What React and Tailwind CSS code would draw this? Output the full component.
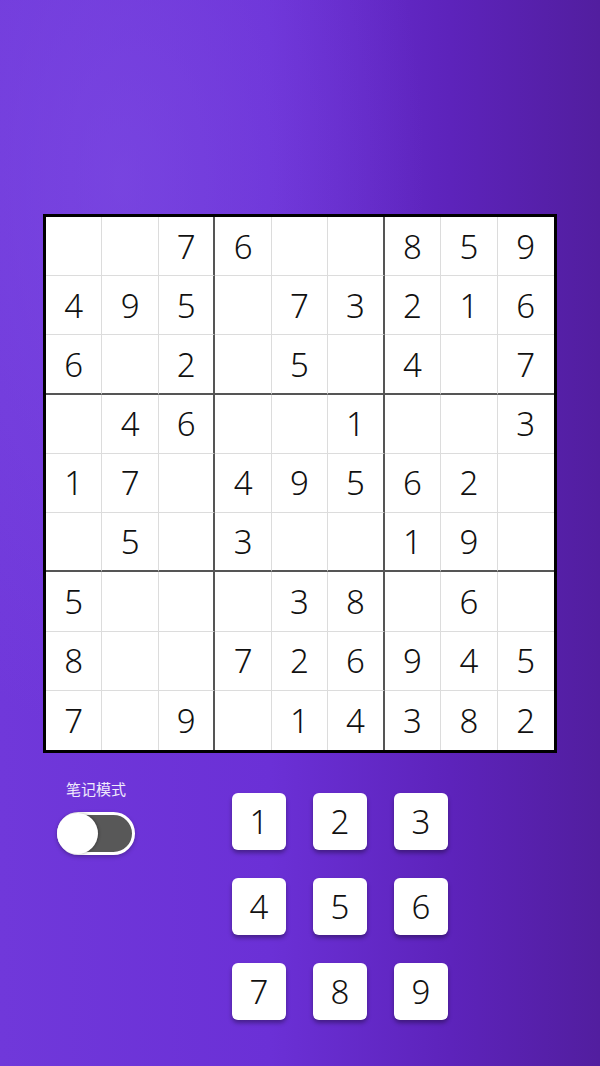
import React from "react";

const GRID = [
  [0, 0, 7, 6, 0, 0, 8, 5, 9],
  [4, 9, 5, 0, 7, 3, 2, 1, 6],
  [6, 0, 2, 0, 5, 0, 4, 0, 7],
  [0, 4, 6, 0, 0, 1, 0, 0, 3],
  [1, 7, 0, 4, 9, 5, 6, 2, 0],
  [0, 5, 0, 3, 0, 0, 1, 9, 0],
  [5, 0, 0, 0, 3, 8, 0, 6, 0],
  [8, 0, 0, 7, 2, 6, 9, 4, 5],
  [7, 0, 9, 0, 1, 4, 3, 8, 2],
];

function Cell({ v, r, c }) {
  const right =
    c === 2 || c === 5
      ? "border-r-[2px] border-r-[#555555]"
      : c < 8
      ? "border-r border-r-[#dcdcdc]"
      : "";
  const bottom =
    r === 2 || r === 5
      ? "border-b-[2px] border-b-[#555555]"
      : r < 8
      ? "border-b border-b-[#dcdcdc]"
      : "";
  return (
    <div
      className={`flex items-center justify-center bg-white text-[33px] font-light text-[#111] leading-none ${right} ${bottom}`}
    >
      {v ? v : ""}
    </div>
  );
}

export default function App() {
  return (
    <div
      className="w-[600px] h-[1066px] overflow-hidden bg-[radial-gradient(ellipse_at_20%_17%,rgba(128,80,230,0.55)_0%,rgba(128,80,230,0)_45%),linear-gradient(90deg,#7038da_0%,#6b30d6_45%,#5d23bb_75%,#521e9f_100%)]"
      style={{ fontFamily: '"Noto Sans", "Noto Sans CJK SC", sans-serif' }}
    >
      <div className="pt-[214px] px-[43px]">
        <div className="w-[514px] h-[539px] border-[3px] border-black bg-white grid grid-cols-9 grid-rows-9">
          {GRID.map((row, r) =>
            row.map((v, c) => <Cell key={`${r}-${c}`} v={v} r={r} c={c} />)
          )}
        </div>
      </div>

      <div className="flex items-start pl-[57px] mt-[26px]">
        <div className="w-[78px] flex flex-col items-center">
          <div className="text-[15px] leading-[20px] text-white/90 whitespace-nowrap" style={{ fontFamily: '"Noto Sans CJK SC", sans-serif' }}>
            笔记模式
          </div>
          <div className="mt-[13px] w-[78px] h-[43px] rounded-full bg-[#585858] border-[3px] border-white flex items-center shadow-[0_2px_4px_rgba(0,0,0,0.25)]">
            <div className="w-[41px] h-[41px] shrink-0 -ml-[3px] rounded-full bg-white shadow-[1px_0_3px_rgba(0,0,0,0.3)]" />
          </div>
        </div>

        <div className="ml-[97px] mt-[14px] grid grid-cols-[54px_54px_54px] gap-x-[27px] gap-y-[28px]">
          {[1, 2, 3, 4, 5, 6, 7, 8, 9].map((n) => (
            <div
              key={n}
              className="w-[54px] h-[57px] rounded-[6px] bg-white flex items-center justify-center text-[33px] font-light leading-none text-[#111] shadow-[0_3px_4px_rgba(0,0,0,0.35)]"
            >
              {n}
            </div>
          ))}
        </div>
      </div>
    </div>
  );
}
